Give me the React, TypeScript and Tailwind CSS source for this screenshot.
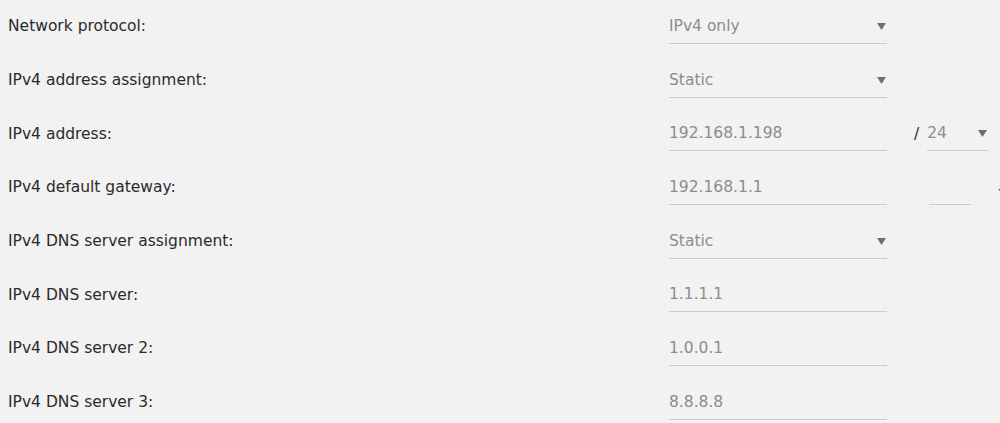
import React from 'react';

type Row = {
  label: string;
  value: string;
  select?: boolean;
  extra?: 'prefix' | 'gatewayMetric';
};

const rows: Row[] = [
  { label: 'Network protocol:', value: 'IPv4 only', select: true },
  { label: 'IPv4 address assignment:', value: 'Static', select: true },
  { label: 'IPv4 address:', value: '192.168.1.198', extra: 'prefix' },
  { label: 'IPv4 default gateway:', value: '192.168.1.1', extra: 'gatewayMetric' },
  { label: 'IPv4 DNS server assignment:', value: 'Static', select: true },
  { label: 'IPv4 DNS server:', value: '1.1.1.1' },
  { label: 'IPv4 DNS server 2:', value: '1.0.0.1' },
  { label: 'IPv4 DNS server 3:', value: '8.8.8.8' },
];

function Caret() {
  return (
    <svg width="9" height="8" viewBox="0 0 9 8" className="shrink-0">
      <path d="M0 1 L9 1 L4.5 8 Z" fill="#6f6f6f" />
    </svg>
  );
}

function Field({ value, select, width }: { value: string; select?: boolean; width: string }) {
  return (
    <div className={`${width} flex items-center justify-between border-b border-[#cdcdcd] pt-[6px] pb-[7px] pr-[1px]`}>
      <span className="leading-[20px] text-[#8c8c8c]">{value}</span>
      {select && <Caret />}
    </div>
  );
}

export default function App() {
  return (
    <div
      className="w-[1000px] h-[423px] overflow-hidden bg-[#f2f2f2] text-[15.5px]"
      style={{ fontFamily: '"DejaVu Sans", Verdana, sans-serif' }}
    >
      {rows.map((row) => (
        <div key={row.label} className="flex items-center h-[53.7px]">
          <div className="w-[669px] shrink-0 pl-2 text-[#2b2b2b]">{row.label}</div>
          <Field value={row.value} select={row.select} width="w-[218px] shrink-0" />
          {row.extra === 'prefix' && (
            <div className="flex items-center">
              <span className="ml-[27px] mr-[8px] text-[#2b2b2b]">/</span>
              <Field value="24" select width="w-[61px] shrink-0" />
            </div>
          )}
          {row.extra === 'gatewayMetric' && (
            <div className="flex items-center">
              <div className="ml-[42px] w-[42px] h-[34px] shrink-0 border-b border-[#cdcdcd]" />
              <svg width="10" height="16" viewBox="0 0 10 16" className="ml-[26px] -mt-[2px] shrink-0">
                <path d="M5 1 V13 M2 10 L5 14 L8 10" stroke="#555" strokeWidth="1.2" fill="none" />
              </svg>
            </div>
          )}
        </div>
      ))}
    </div>
  );
}
